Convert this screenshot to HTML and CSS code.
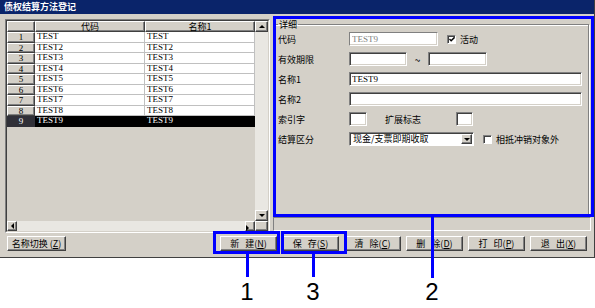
FILE: index.html
```html
<!DOCTYPE html>
<html lang="zh-CN">
  <head>
    <meta charset="UTF-8" />
    <title>债权结算方法登记</title>
    <link rel="stylesheet" href="styles.css">
  </head>
  <body>
    <div class="window">
      <div class="titlebar">债权结算方法登记</div>

      <div class="main">
        <div class="grid-box">
          <div class="grid-inner">
            <div class="table">
              <div class="hdr"></div>
              <div class="hdr">代码</div>
              <div class="hdr">名称1</div>

              <div class="rowhdr">1</div><div class="cell">TEST</div><div class="cell">TEST</div>
              <div class="rowhdr">2</div><div class="cell">TEST2</div><div class="cell">TEST2</div>
              <div class="rowhdr">3</div><div class="cell">TEST3</div><div class="cell">TEST3</div>
              <div class="rowhdr">4</div><div class="cell">TEST4</div><div class="cell">TEST4</div>
              <div class="rowhdr">5</div><div class="cell">TEST5</div><div class="cell">TEST5</div>
              <div class="rowhdr">6</div><div class="cell">TEST6</div><div class="cell">TEST6</div>
              <div class="rowhdr">7</div><div class="cell">TEST7</div><div class="cell">TEST7</div>
              <div class="rowhdr">8</div><div class="cell">TEST8</div><div class="cell">TEST8</div>
              <div class="rowhdr sel">9</div><div class="cell sel">TEST9</div><div class="cell sel">TEST9</div>
            </div>

            <div class="vscroll">
              <span class="sbtn"><i class="tri up"></i></span>
              <span class="track"></span>
              <span class="sbtn"><i class="tri down"></i></span>
            </div>

            <div class="hscroll">
              <span class="sbtn"><i class="tri left"></i></span>
              <span class="track"></span>
              <span class="sbtn"><i class="tri right"></i></span>
            </div>

            <div class="sc-corner"></div>
          </div>
        </div>

        <div class="right">
          <div class="detail">
            <fieldset>
              <legend>详细</legend>
              <div class="form">
                <div class="row">
                  <span class="lbl">代码</span>
                  <input class="text w-code" type="text" value="TEST9" disabled>
                  <span class="check on">
                    <svg width="7" height="7" viewBox="0 0 7 7"><path d="M0.5 3 L2.5 5 L6.5 1" fill="none" stroke="#000" stroke-width="1.6"/></svg>
                  </span>
                  <span class="check-lbl">活动</span>
                </div>
                <div class="row">
                  <span class="lbl">有效期限</span>
                  <input class="text w-date" type="text">
                  <span class="tilde">~</span>
                  <input class="text w-date2" type="text">
                </div>
                <div class="row">
                  <span class="lbl">名称1</span>
                  <input class="text w-name" type="text" value="TEST9">
                </div>
                <div class="row">
                  <span class="lbl">名称2</span>
                  <input class="text w-name" type="text">
                </div>
                <div class="row">
                  <span class="lbl">索引字</span>
                  <input class="text w-small" type="text">
                  <span class="lbl ext">扩展标志</span>
                  <input class="text w-small2" type="text">
                </div>
                <div class="row">
                  <span class="lbl">结算区分</span>
                  <div class="combo">
                    <span class="combo-text">现金/支票即期收取</span>
                    <span class="combo-btn"><i class="tri down"></i></span>
                  </div>
                  <span class="check"></span>
                  <span class="check-lbl">相抵冲销对象外</span>
                </div>
              </div>
            </fieldset>
          </div>
          <div class="status"></div>
        </div>
      </div>

      <div class="footer">
        <button class="btn w-switch">名称切换 (<u>Z</u>)</button>
        <div class="actions">
          <button class="btn">新<span class="gap"></span>建(<u>N</u>)</button>
          <button class="btn">保<span class="gap"></span>存(<u>S</u>)</button>
          <button class="btn">清<span class="gap"></span>除(<u>C</u>)</button>
          <button class="btn">删<span class="gap"></span>除(<u>D</u>)</button>
          <button class="btn">打<span class="gap"></span>印(<u>P</u>)</button>
          <button class="btn">退<span class="gap"></span>出(<u>X</u>)</button>
        </div>
      </div>
    </div>

    <!-- annotation marks drawn over the screen -->
    <div class="mark mark-detail"></div>
    <div class="mark mark-new"></div>
    <div class="mark mark-save"></div>
    <div class="leader l1"></div>
    <div class="leader l3"></div>
    <div class="leader l2"></div>
    <span class="num n1">1</span>
    <span class="num n3">3</span>
    <span class="num n2">2</span>
  </body>
</html>
```

FILE: styles.css
```css
* {
  margin: 0;
  padding: 0;
  box-sizing: border-box;
}

body {
  position: relative;
  width: 595px;
  height: 308px;
  overflow: hidden;
  background-color: #fff;
  font: 9px/11px "Liberation Serif", "Noto Sans CJK SC", serif;
  color: #000;
}

.window {
  width: 595px;
  height: 258px;
  background-color: #d4d0c8;
  border-right: 1px solid #404040;
  border-bottom: 1px solid #404040;
  display: flex;
  flex-direction: column;
}

.titlebar {
  height: 14px;
  line-height: 14px;
  padding-left: 4px;
  background-color: #0a246a;
  color: #fff;
  font-weight: bold;
  font-family: "Noto Sans CJK SC", sans-serif;
}

.main {
  display: flex;
  align-items: flex-start;
  gap: 3px;
  padding-left: 5px;
}

/* grid */
.grid-box {
  margin-top: 5px;
  border: 1px solid;
  border-color: #808080 #fff #fff #808080;
}

.grid-inner {
  width: 263px;
  height: 212px;
  border: 1px solid;
  border-color: #404040 #d4d0c8 #d4d0c8 #404040;
  display: grid;
  grid-template-columns: 248px 13px;
  grid-template-rows: 200px 10px;
  background-color: #d4d0c8;
}

.table {
  display: grid;
  grid-template-columns: 28px 110px 110px;
  grid-template-rows: 11px;
  grid-auto-rows: 10.5px;
  align-content: start;
}

.hdr,
.rowhdr,
.sbtn,
.combo-btn,
.btn,
.sc-corner {
  background-color: #d4d0c8;
  border: 1px solid;
  border-color: #fff #404040 #404040 #fff;
  box-shadow: inset -1px -1px #808080;
}

.hdr {
  text-align: center;
  line-height: 9px;
  font-family: "Noto Sans CJK SC", sans-serif;
}

.rowhdr {
  text-align: center;
  line-height: 8.5px;
}

.rowhdr.sel {
  background-color: #303038;
  color: #fff;
  border-color: #303038;
  box-shadow: none;
}

.cell {
  background-color: #fff;
  border-right: 1px solid #c0c0c0;
  border-bottom: 1px solid #c0c0c0;
  padding-left: 2px;
  line-height: 9.5px;
  white-space: nowrap;
  overflow: hidden;
}

.cell.sel {
  background-color: #000;
  color: #fff;
  border-color: #000;
}

/* scrollbars */
.vscroll,
.hscroll {
  display: flex;
  background-color: #e9e7e2;
}

.vscroll {
  flex-direction: column;
}

.sbtn {
  flex: none;
  display: flex;
  align-items: center;
  justify-content: center;
}

.vscroll .sbtn {
  height: 11px;
}

.hscroll .sbtn {
  width: 10px;
}

.track {
  flex: 1;
}

.tri {
  width: 0;
  height: 0;
  border: 3px solid transparent;
}

.tri.up {
  border-top-width: 0;
  border-bottom-color: #000;
}

.tri.down {
  border-bottom-width: 0;
  border-top-color: #000;
}

.tri.left {
  border-left-width: 0;
  border-right-color: #000;
}

.tri.right {
  border-right-width: 0;
  border-left-color: #000;
}

/* detail */
.right {
  margin-top: 3px;
  width: 318px;
  display: flex;
  flex-direction: column;
  gap: 1px;
}

.detail {
  height: 199px;
  padding: 2px 2px 0 1px;
}

fieldset {
  height: 100%;
  border: 1px solid #808080;
  box-shadow: 1px 1px 0 #fff, inset 1px 1px 0 #fff;
  padding: 0 3px;
  font-family: "Noto Sans CJK SC", sans-serif;
}

legend {
  padding: 0 1px;
  line-height: 11px;
}

.form {
  display: flex;
  flex-direction: column;
  gap: 6px;
  padding-top: 2px;
}

.row {
  display: flex;
  align-items: center;
  height: 14px;
}

.lbl {
  width: 71px;
  flex: none;
}

.lbl.ext {
  margin-left: 18px;
}

.text {
  height: 14px;
  flex: none;
  border: 1px solid;
  border-color: #808080 #fff #fff #808080;
  box-shadow: inset 1px 1px #404040, inset -1px -1px #d4d0c8;
  background-color: #fff;
  font: 9px "Liberation Serif", serif;
  color: #000;
  padding: 0 2px;
  outline: none;
}

.text:disabled {
  color: #808080;
  box-shadow: inset -1px -1px #d4d0c8;
}

.w-code { width: 89px; }
.w-date { width: 58px; }
.w-date2 { width: 59px; }
.w-name { width: 233px; }
.w-small { width: 18px; }
.w-small2 { width: 17px; }

.tilde {
  width: 21px;
  text-align: center;
  font-size: 10px;
}

.check {
  width: 9px;
  height: 9px;
  margin-left: 9px;
  flex: none;
  border: 1px solid;
  border-color: #808080 #fff #fff #808080;
  box-shadow: inset 1px 1px #404040;
  background-color: #fff;
  display: flex;
  align-items: center;
  justify-content: center;
}

.check svg {
  margin: 1px 0 0 1px;
}

.check-lbl {
  margin-left: 4px;
}

.combo {
  width: 125px;
  height: 14px;
  display: flex;
  border: 1px solid;
  border-color: #808080 #fff #fff #808080;
  box-shadow: inset 1px 1px #404040;
  background-color: #fff;
  padding: 1px;
}

.combo-text {
  flex: 1;
  padding-left: 2px;
  line-height: 10px;
}

.combo-btn {
  width: 11px;
  flex: none;
  display: flex;
  align-items: center;
  justify-content: center;
}

.status {
  height: 14px;
  border: 1px solid;
  border-color: #808080 #fff #fff #808080;
}

/* buttons */
.footer {
  display: flex;
  padding: 3px 7px 0 7px;
}

.actions {
  display: flex;
  gap: 5px;
  margin-left: auto;
}

.btn {
  width: 57px;
  height: 15px;
  font: 9px/12px "Noto Sans CJK SC", sans-serif;
  color: #000;
}

.btn .gap {
  display: inline-block;
  width: 6px;
}

.btn.w-switch {
  width: 59px;
}

/* annotations */
.mark {
  position: absolute;
  border: 3px solid #0000ff;
}

.mark-detail {
  left: 273px;
  top: 16px;
  width: 321px;
  height: 201px;
}

.mark-new {
  left: 213px;
  top: 231px;
  width: 67px;
  height: 23px;
}

.mark-save {
  left: 281px;
  top: 231px;
  width: 66px;
  height: 23px;
}

.leader {
  position: absolute;
  width: 3px;
  background-color: #0000ff;
}

.l1 { left: 246px; top: 254px; height: 23px; }
.l3 { left: 312px; top: 254px; height: 23px; }
.l2 { left: 431px; top: 217px; height: 61px; }

.num {
  position: absolute;
  top: 280px;
  width: 20px;
  margin-left: -10px;
  text-align: center;
  font: 24px/24px "Liberation Sans", sans-serif;
}

.n1 { left: 247px; }
.n3 { left: 313px; }
.n2 { left: 432px; }
```
